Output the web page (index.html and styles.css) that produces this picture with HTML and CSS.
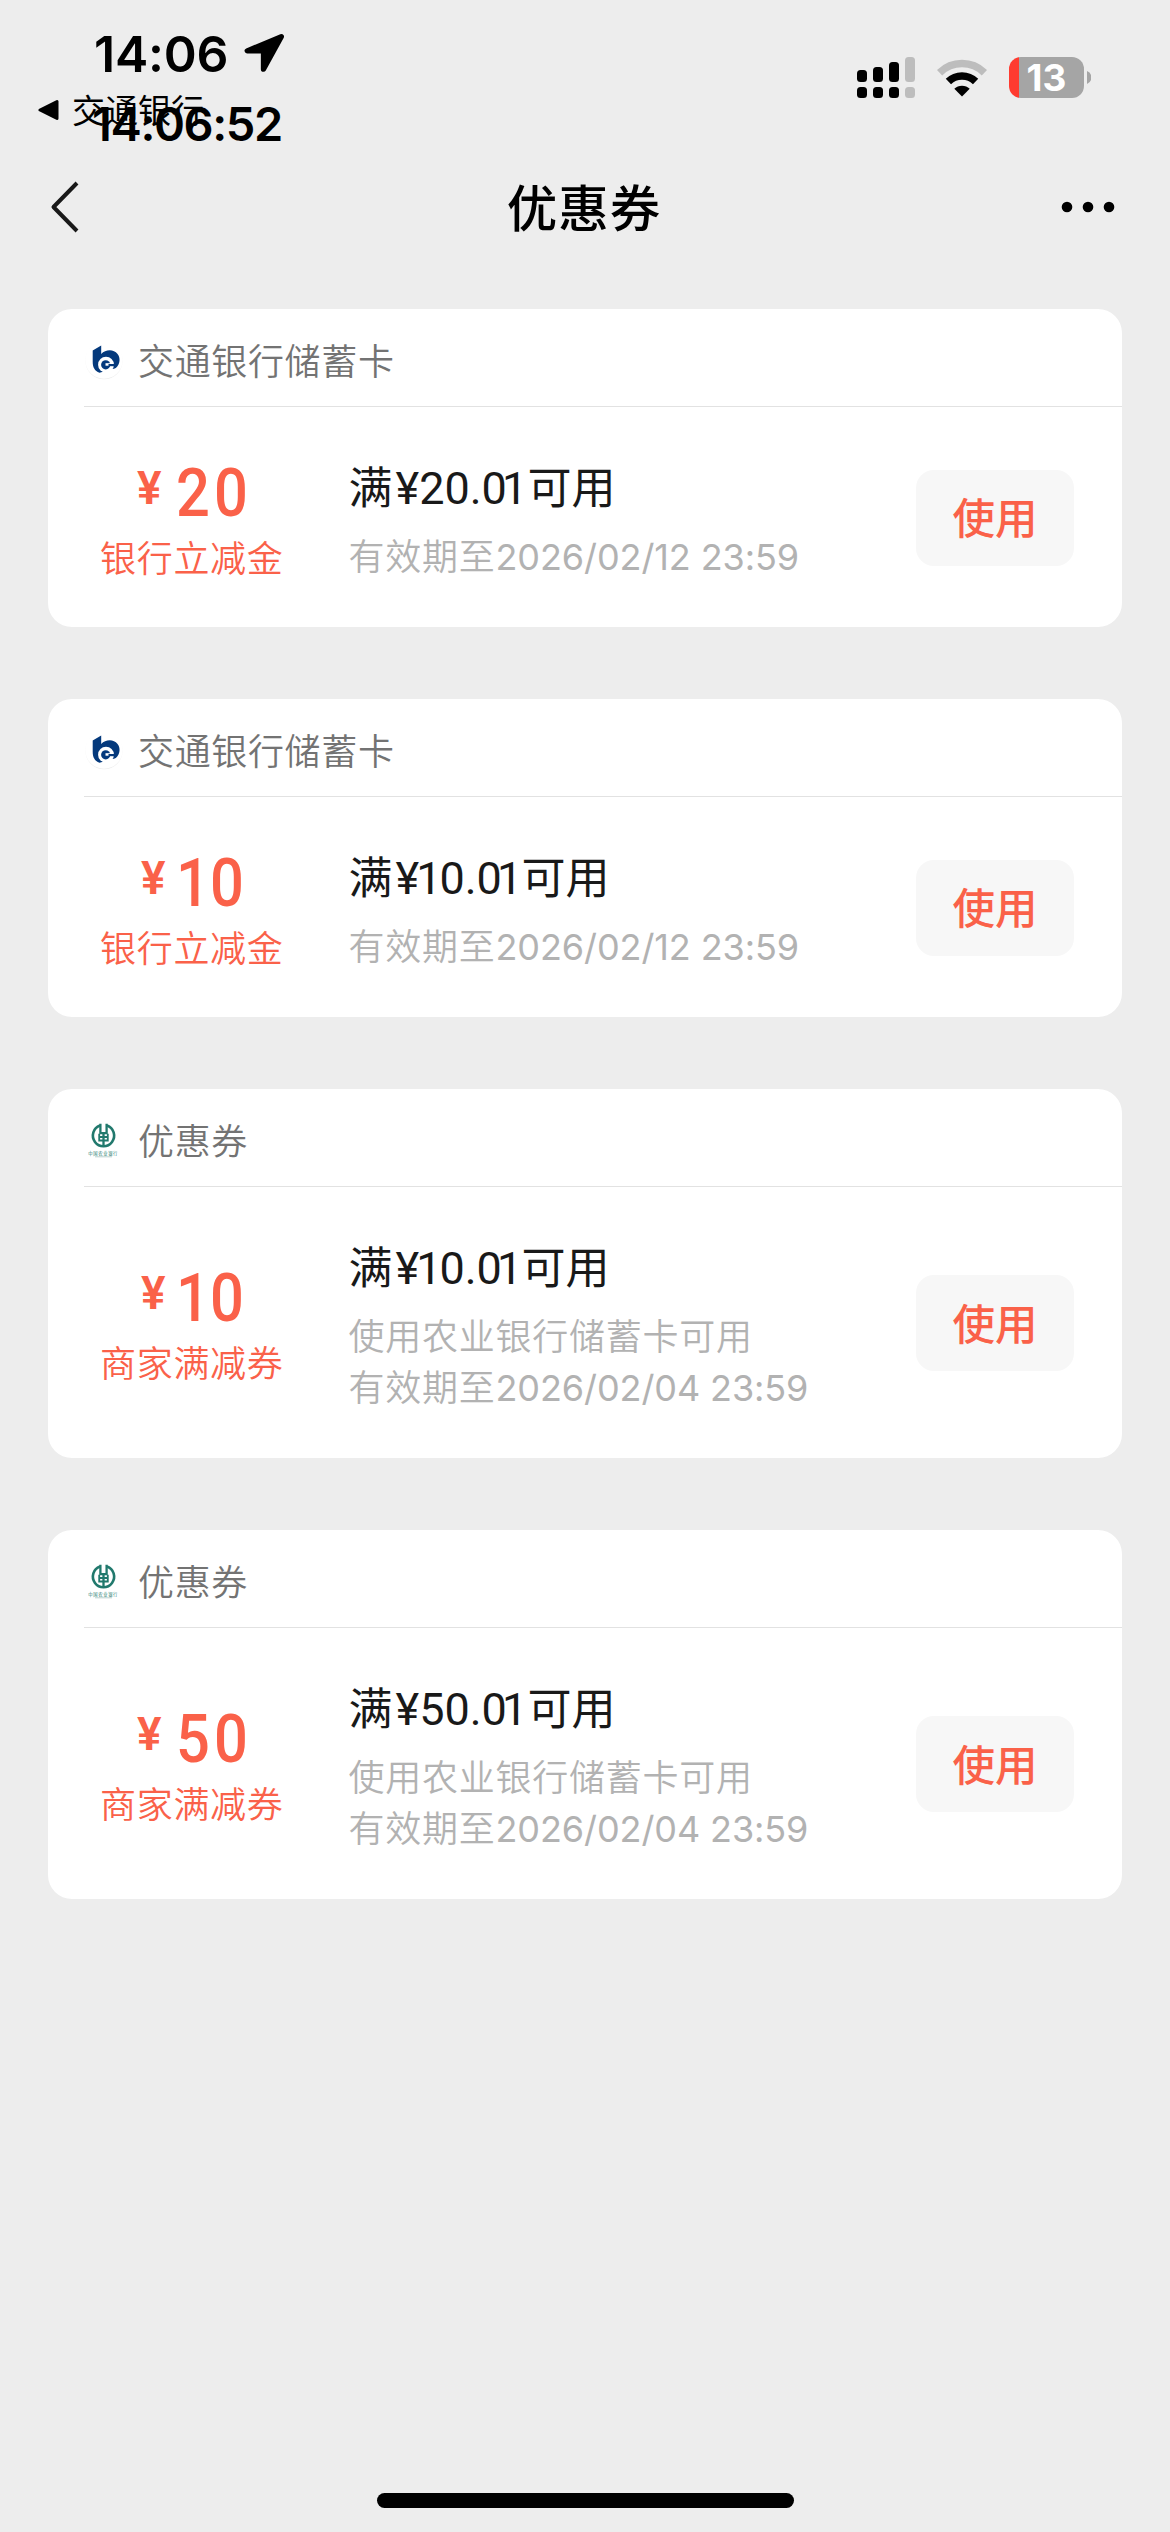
FILE: index.html
```html
<!DOCTYPE html>
<html lang="zh-CN">
<head>
<meta charset="utf-8">
<title>优惠券</title>
<link rel="stylesheet" href="styles.css">
</head>
<body>
<svg class="defs" aria-hidden="true">
  <symbol id="bocom" viewBox="0 0 40 40">
    <circle cx="20" cy="20.800" r="18.500" fill="#ececec"/>
    <circle cx="20" cy="20" r="18.800" fill="#fff"/>
    <path fill="#04397c" d="M8.700 10.500 17.200 5.600V14C20.500 10.500 26 9.300 30 11.300c5.500 2.500 6.800 8.700 4.500 13.200-1.500 3-3.500 4.500-6.500 4.500L15.500 32.700C10.500 31 8.700 27 8.700 22Z"/>
    <circle cx="22" cy="24.700" r="7.900" fill="#fff"/>
    <circle cx="21.700" cy="24.800" r="4.600" fill="#04397c"/>
    <path fill="#fff" d="M21.500 23.200h5v2.500h-5Z"/>
    <path fill="#04397c" d="M24.500 24h7v2.200h-7Z"/>
  </symbol>
  <symbol id="abc" viewBox="0 0 40 40">
    <g fill="none" stroke="#21796d">
      <path stroke-width="2.600" d="M16 5.600A10.600 10.600 0 1 0 23 5.600"/>
      <path stroke-width="2.300" d="M19.500 13V27M16.400 3.800v9.400h6.200V3.800"/>
      <path stroke-width="1.800" d="M15.200 13.700v6.800h8.600v-6.800M15.200 17h8.600"/>
    </g>
    <text x="19.200" y="34.600" text-anchor="middle" class="abc-name">中国农业银行</text>
    <path d="M11 36.800h17" stroke="#9bbdb8" stroke-width=".7"/>
  </symbol>
</svg>

<header class="status">
  <div class="clock">
    <span class="time">14:06</span>
    <svg class="arrow" viewBox="0 0 40 40"><path d="M36.500 3.500 4 17h15.500v17.500Z" stroke="#000" stroke-width="5" stroke-linejoin="round"/></svg>
  </div>
  <div class="signals">
    <svg width="58" height="41" viewBox="0 0 58 41">
      <rect y="13" width="10" height="12" rx="3.500"/><rect x="16" y="10" width="10" height="15" rx="3.500"/><rect x="32" y="5" width="10" height="20" rx="3.500"/><rect x="48" width="10" height="25" rx="3.500" fill="#bdbdbd"/>
      <rect y="30" width="10" height="11" rx="3.500"/><rect x="16" y="30" width="10" height="11" rx="3.500"/><rect x="32" y="30" width="10" height="11" rx="3.500"/><rect x="48" y="30" width="10" height="11" rx="3.500" fill="#bdbdbd"/>
    </svg>
    <svg class="wifi" width="50" height="38" viewBox="0 0 50 38">
      <path fill="none" stroke="#bdbdbd" stroke-width="7.500" d="M2.600 13.700a32 32 0 0 1 44.800 0"/>
      <path fill="none" stroke="#000" stroke-width="7.500" d="M11.400 22.500a19.400 19.400 0 0 1 27.200 0"/>
      <path d="M25 37.500 17.300 29.800a11 11 0 0 1 15.400 0Z"/>
    </svg>
    <div class="battery"><span>13</span></div>
    <svg class="tip" width="4" height="13" viewBox="0 0 4 13"><path d="M0 0a7 7 0 0 1 0 13Z" fill="#a5a5a5"/></svg>
  </div>
  <div class="return"><svg width="22" height="22" viewBox="0 0 22 22"><path d="M2 11 19 2.500v17Z" stroke="#000" stroke-width="3" stroke-linejoin="round"/></svg><span>交通银行</span></div>
  <div class="seconds">14:06:52</div>
</header>

<nav class="nav">
  <svg class="back" width="30" height="52" viewBox="0 0 30 52"><path fill="none" stroke="#191919" stroke-width="4" stroke-linejoin="round" d="M27 2 3.500 26 27 50"/></svg>
  <h1>优惠券</h1>
  <svg class="more" width="54" height="12" viewBox="0 0 54 12"><circle cx="6" cy="6" r="5.300"/><circle cx="27" cy="6" r="5.300"/><circle cx="48" cy="6" r="5.300"/></svg>
</nav>

<main class="list">
  <section class="card">
    <div class="card-head"><svg class="logo"><use href="#bocom"/></svg><span>交通银行储蓄卡</span></div>
    <div class="card-body">
      <div class="worth"><div class="amount"><span class="yen">¥</span><span class="num">20</span></div><div class="kind">银行立减金</div></div>
      <div class="info"><div class="rule">满<span class="money">¥20.0<b>1</b></span>可用</div><div class="note">有效期至<span class="date">2026/02/12 23:59</span></div></div>
      <button class="use">使用</button>
    </div>
  </section>
  <section class="card">
    <div class="card-head"><svg class="logo"><use href="#bocom"/></svg><span>交通银行储蓄卡</span></div>
    <div class="card-body">
      <div class="worth"><div class="amount ten"><span class="yen">¥</span><span class="num"><b>1</b>0</span></div><div class="kind">银行立减金</div></div>
      <div class="info"><div class="rule">满<span class="money ten">¥<b>1</b>0.0<b>1</b></span>可用</div><div class="note">有效期至<span class="date">2026/02/12 23:59</span></div></div>
      <button class="use">使用</button>
    </div>
  </section>
  <section class="card tall">
    <div class="card-head"><svg class="logo"><use href="#abc"/></svg><span>优惠券</span></div>
    <div class="card-body">
      <div class="worth"><div class="amount ten"><span class="yen">¥</span><span class="num"><b>1</b>0</span></div><div class="kind">商家满减券</div></div>
      <div class="info"><div class="rule">满<span class="money ten">¥<b>1</b>0.0<b>1</b></span>可用</div><div class="note">使用农业银行储蓄卡可用</div><div class="note">有效期至<span class="date">2026/02/04 23:59</span></div></div>
      <button class="use">使用</button>
    </div>
  </section>
  <section class="card tall">
    <div class="card-head"><svg class="logo"><use href="#abc"/></svg><span>优惠券</span></div>
    <div class="card-body">
      <div class="worth"><div class="amount"><span class="yen">¥</span><span class="num">50</span></div><div class="kind">商家满减券</div></div>
      <div class="info"><div class="rule">满<span class="money">¥50.0<b>1</b></span>可用</div><div class="note">使用农业银行储蓄卡可用</div><div class="note">有效期至<span class="date">2026/02/04 23:59</span></div></div>
      <button class="use">使用</button>
    </div>
  </section>
</main>
<footer class="home"><div></div></footer>
</body>
</html>
```
FILE: styles.css
```css
* { box-sizing: border-box; }
body {
  margin: 0;
  width: 1170px;
  height: 2532px;
  display: flex;
  flex-direction: column;
  background: #ededed;
  color: #191919;
  font-family: "Noto Sans CJK SC", sans-serif;
  overflow: hidden;
}
.defs { position: absolute; width: 0; height: 0; }
.abc-name { font: 4.300px "Noto Sans CJK SC", sans-serif; fill: #21796d; }

.status {
  position: relative;
  height: 156px;
  flex: none;
  display: flex;
  justify-content: space-between;
  color: #000;
}
.clock { display: flex; align-items: flex-start; padding: 24px 0 0 94px; }
.time { font: 600 50px/60px Inter, sans-serif; width: 149px; white-space: nowrap; letter-spacing: -.2px; }
.arrow { width: 42px; height: 42px; margin-top: 9px; }
.signals { display: flex; align-items: flex-start; padding: 57px 79px 0 0; }
.wifi { margin: 2px 22px 0; }
.battery {
  width: 75px;
  height: 41px;
  border-radius: 12px;
  background: linear-gradient(90deg, #ff3b30 10px, #a5a5a5 10px);
  color: #fff;
  text-align: center;
  font: 700 37px/42px Inter, sans-serif;
}
.tip { margin: 14px 0 0 3px; }
.return {
  position: absolute;
  left: 38px;
  top: 88px;
  display: flex;
  align-items: center;
  gap: 12px;
  font-size: 33px;
  line-height: 46px;
}
.return span { margin-top: -2px; }
.seconds { position: absolute; left: 92px; top: 95px; font: 600 47px/58px Inter, sans-serif; letter-spacing: -1.400px; }

.nav {
  height: 153px;
  flex: none;
  display: grid;
  grid-template-columns: 1fr auto 1fr;
  align-items: start;
  padding: 0 55px 0 53px;
  color: #000;
}
.nav h1 { margin: 12px 0 0; font-size: 50.500px; line-height: 74px; font-weight: 500; letter-spacing: 1px; }
.back { margin: 25px 0 0 -3px; }
.more { justify-self: end; margin-top: 45px; }

.list { display: flex; flex-direction: column; gap: 72px; padding: 0 48px; }
.card { height: 318px; display: flex; flex-direction: column; background: #fff; border-radius: 24px; }
.card.tall { height: 369px; }
.card-head {
  height: 98px;
  margin-left: 36px;
  border-bottom: 1px solid #e2e2e2;
  display: flex;
  align-items: center;
  gap: 14px;
  padding-top: 2px;
  color: #737373;
  font-size: 36px;
  font-weight: 350;
  letter-spacing: .65px;
}
.logo { width: 40px; height: 40px; margin-top: 2px; }
.card-body { flex: 1; display: flex; align-items: center; padding: 1px 48px 0 0; }
.worth { width: 286px; margin-top: -2px; color: #fa6149; }
.amount { height: 78px; display: flex; align-items: flex-start; padding-left: 89px; }
.amount.ten { padding-left: 93px; }
.yen { width: 39px; font: 600 46px/50px Roboto, sans-serif; margin-top: 10px; }
.ten .yen { width: 35px; }
.num { font: 550 67px/79px Roboto, sans-serif; margin-top: 1px; white-space: nowrap; letter-spacing: 4.500px; transform: scaleX(.89); transform-origin: left; }
.num b { font-weight: 550; letter-spacing: 0; }
.kind { padding-left: 52px; font-size: 36px; line-height: 50px; font-weight: 350; letter-spacing: .7px; }
.info { flex: 1; margin-top: -2px; padding-left: 14.500px; white-space: nowrap; }
.rule { height: 79px; font-size: 44px; line-height: 70px; }
.money { display: inline-block; width: 132px; margin-left: 3px; font: 400 45px/60px Roboto, sans-serif; }
.money.ten { width: 126px; }
.money b { font-weight: 400; margin-left: -5px; margin-right: -1px; }
.money.ten b:first-child { margin-left: -3px; margin-right: -2px; }
.note { font-size: 36px; line-height: 51px; font-weight: 350; letter-spacing: .75px; color: #b2b2b2; }
.date { font-family: Inter, sans-serif; font-weight: 400; letter-spacing: -.1px; }
.use {
  width: 158px;
  height: 96px;
  padding: 0 0 3px;
  border: 0;
  border-radius: 18px;
  background: #f7f7f7;
  color: #fa6149;
  font: 500 42.500px/60px "Noto Sans CJK SC", sans-serif;
}
.home { margin-top: auto; height: 39px; flex: none; display: flex; justify-content: center; }
.home div { width: 417px; height: 15px; border-radius: 8px; background: #000; }
```
